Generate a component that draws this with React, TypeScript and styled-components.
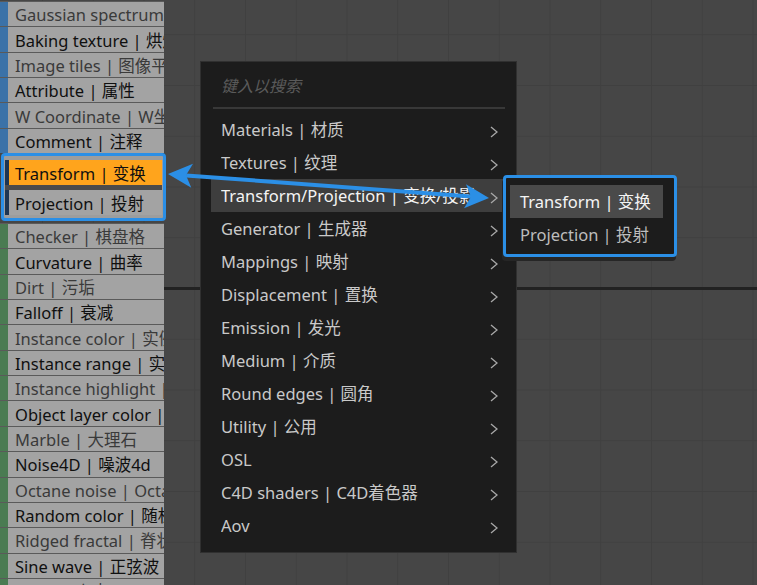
import React from "react";
import styled, { createGlobalStyle } from "styled-components";

const Global = createGlobalStyle`
  html, body { margin: 0; padding: 0; background: #464646; overflow: hidden; }
  * { box-sizing: border-box; }
`;

const FONT = `"Noto Sans", "Noto Sans CJK SC", sans-serif`;
const BLUE = "#2b8fe6";

const Canvas = styled.div`
  position: relative;
  width: 757px;
  height: 585px;
  overflow: hidden;
  font-family: ${FONT};
  background-color: #464646;
  background-image:
    linear-gradient(to bottom, transparent 287px, #222 287px, #222 290px, transparent 290px),
    linear-gradient(to right, #404040 1px, transparent 1px),
    linear-gradient(to bottom, #404040 1px, transparent 1px);
  background-size: 100% 100%, 50.75px 50.75px, 50.75px 50.75px;
  background-repeat: no-repeat, repeat, repeat;
  background-position: 0 0, 245px 0, 0 288px;
`;

const Panel = styled.div`
  width: 164px;
  display: flex;
  flex-direction: column;
  padding-top: 1px;
`;

const Row = styled.div`
  display: flex;
  height: 25.35px;
  border-top: 1px solid #5a5a5a;
`;

const Strip = styled.div<{ $color: string }>`
  width: 8px;
  flex: none;
  background: ${(p) => p.$color};
`;

const Cell = styled.div<{ $dim?: boolean; $bg?: string }>`
  flex: 1;
  min-width: 0;
  display: flex;
  align-items: center;
  padding-left: 7px;
  background: ${(p) => p.$bg ?? "#a3a3a3"};
  color: ${(p) => (p.$dim ? "#3a3a3a" : "#101010")};
  font-size: 16.5px;
  white-space: nowrap;
  overflow: hidden;
`;

const Group = styled.div`
  margin: 0 -2px 2px 1px;
  border: 3px solid ${BLUE};
  border-radius: 4px;
  background: #9d9d9d;
  padding: 4px 1px 3px 1px;
  display: flex;
  flex-direction: column;
`;

const GroupRow = styled.div`
  display: flex;
  height: 25px;
`;

const NavyStrip = styled.div`
  width: 4px;
  flex: none;
  background: #1d3552;
`;

const GroupCell = styled(Cell)`
  padding-left: 6px;
`;

const Band = styled.div`
  height: 5px;
  background: #4b4b4b;
`;

const Menu = styled.div`
  position: absolute;
  left: 200px;
  top: 61px;
  width: 317px;
  height: 492px;
  background: #1c1c1c;
  border: 1px solid #303030;
  padding: 0 10px 10px;
  display: flex;
  flex-direction: column;
`;

const Search = styled.div`
  height: 47px;
  margin: 0 1px 3.5px 2px;
  padding-left: 8px;
  display: flex;
  align-items: center;
  border-bottom: 2px solid #383838;
  color: #5a5a5a;
  font-style: italic;
  font-size: 16px;
`;

const Item = styled.div<{ $active?: boolean }>`
  height: 33px;
  flex: none;
  display: flex;
  align-items: center;
  padding: 0 8px 0 10px;
  background: ${(p) => (p.$active ? "#3e3e3e" : "transparent")};
  color: ${(p) => (p.$active ? "#f4f4f4" : "#c9c9c9")};
  font-size: 16.5px;
`;

const Label = styled.span`
  flex: 1;
  min-width: 0;
  white-space: nowrap;
  overflow: hidden;
`;

const Chevron = styled.svg`
  flex: none;
  width: 8px;
  height: 12px;
  margin-top: 5px;
  margin-left: 6px;
`;

const Sub = styled.div`
  position: absolute;
  left: 503px;
  top: 175px;
  width: 174px;
  height: 82px;
  border: 3px solid ${BLUE};
  border-radius: 4px;
  background: #1c1c1c;
  padding: 7px 11px 3px 4px;
  box-shadow: -1px 4px 0 #262626;
  display: flex;
  flex-direction: column;
`;

const SubItem = styled.div<{ $active?: boolean }>`
  height: 33px;
  display: flex;
  align-items: center;
  padding-left: 10px;
  padding-bottom: 2px;
  background: ${(p) => (p.$active ? "#4a4a4a" : "transparent")};
  color: ${(p) => (p.$active ? "#f4f4f4" : "#bdbdbd")};
  font-size: 16.5px;
  white-space: nowrap;
`;

const Overlay = styled.svg`
  position: absolute;
  left: 0;
  top: 0;
  width: 757px;
  height: 585px;
  pointer-events: none;
`;

const topRows = [
  "Gaussian spectrum | 高斯光谱",
  "Baking texture | 烘焙纹理",
  "Image tiles | 图像平铺",
  "Attribute | 属性",
  "W Coordinate | W坐标",
  "Comment | 注释",
];

const bottomRows = [
  "Checker | 棋盘格",
  "Curvature | 曲率",
  "Dirt | 污垢",
  "Falloff | 衰减",
  "Instance color | 实例颜色",
  "Instance range | 实例范围",
  "Instance highlight | 实例高亮",
  "Object layer color | 对象层颜色",
  "Marble | 大理石",
  "Noise4D | 噪波4d",
  "Octane noise | Octane噪波",
  "Random color | 随机颜色",
  "Ridged fractal | 脊状分形",
  "Sine wave | 正弦波",
  "Spots | 斑点",
];

const menuItems = [
  "Materials | 材质",
  "Textures | 纹理",
  "Transform/Projection | 变换/投影",
  "Generator | 生成器",
  "Mappings | 映射",
  "Displacement | 置换",
  "Emission | 发光",
  "Medium | 介质",
  "Round edges | 圆角",
  "Utility | 公用",
  "OSL",
  "C4D shaders | C4D着色器",
  "Aov",
];

function Arrow() {
  return (
    <Chevron viewBox="0 0 8 12">
      <polyline points="1,1 7,6 1,11" fill="none" stroke="#a8a8a8" strokeWidth="1.3" />
    </Chevron>
  );
}

export default function App() {
  return (
    <>
      <Global />
      <Canvas>
        <Panel>
          {topRows.map((t, i) => (
            <Row key={t}>
              <Strip $color="#3b72a8" />
              <Cell $dim={i % 2 === 0}>{t}</Cell>
            </Row>
          ))}
          <Group>
            <GroupRow>
              <NavyStrip />
              <GroupCell $bg="#ffa41c">Transform | 变换</GroupCell>
            </GroupRow>
            <Band />
            <GroupRow>
              <NavyStrip />
              <GroupCell>Projection | 投射</GroupCell>
            </GroupRow>
          </Group>
          {bottomRows.map((t, i) => (
            <Row key={t}>
              <Strip $color="#4a7b52" />
              <Cell $dim={i % 2 === 0}>{t}</Cell>
            </Row>
          ))}
        </Panel>

        <Menu>
          <Search>键入以搜索</Search>
          {menuItems.map((t, i) => (
            <Item key={t} $active={i === 2}>
              <Label>{t}</Label>
              <Arrow />
            </Item>
          ))}
        </Menu>

        <Sub>
          <SubItem $active>Transform | 变换</SubItem>
          <SubItem>Projection | 投射</SubItem>
        </Sub>

        <Overlay viewBox="0 0 757 585">
          <line x1="186" y1="175.4" x2="471" y2="196.6" stroke={BLUE} strokeWidth="4" />
          <polygon points="168,174 191.3,187.8 186,175.3 193,163.8" fill={BLUE} />
          <polygon points="489,198 464,208.2 471,196.7 466,184.3" fill={BLUE} />
        </Overlay>
      </Canvas>
    </>
  );
}
